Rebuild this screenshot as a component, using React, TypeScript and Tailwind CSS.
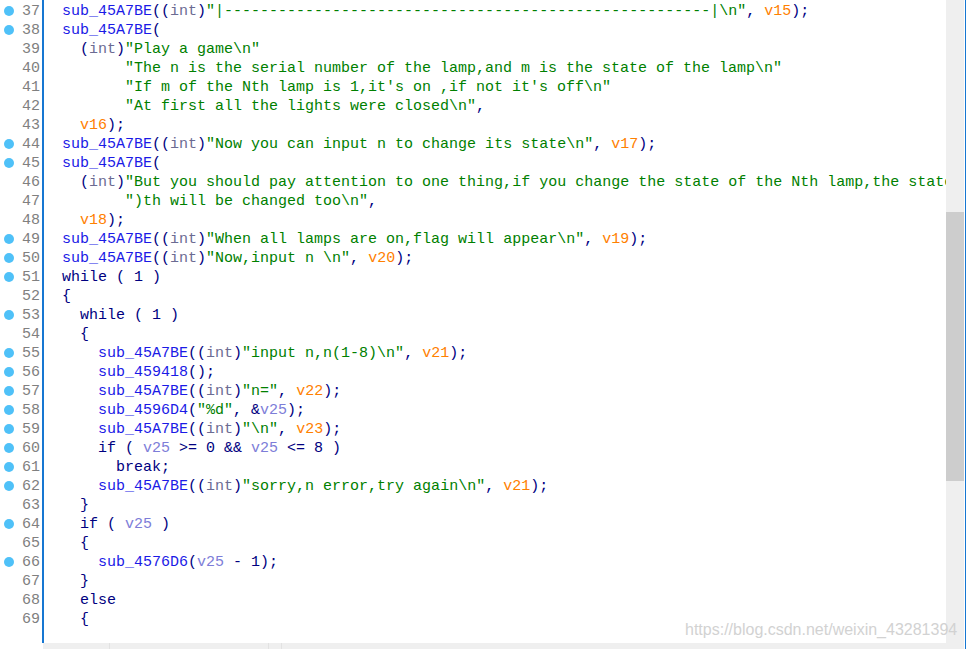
import React from 'react';

type Seg = [string, string];

const C = {
  fn: 'text-[#1a1ae6]',
  kw: 'text-[#000080]',
  str: 'text-[#008000]',
  gv: 'text-[#ff8000]',
  lv: 'text-[#7d7dd8]',
  ty: 'text-[#6b6b92]',
};

const f = (s: string): Seg => [s, C.fn];
const k = (s: string): Seg => [s, C.kw];
const s = (t: string): Seg => [t, C.str];
const g = (t: string): Seg => [t, C.gv];
const l = (t: string): Seg => [t, C.lv];
const INT: Seg[] = [k('('), ['int', C.ty], k(')')];

const dashes = '-'.repeat(54);

// [line number, has breakpoint dot, segments]
const lines: [number, boolean, Seg[]][] = [
  [37, true, [f('sub_45A7BE'), k('('), ...INT, s('"|' + dashes + '|\\n"'), k(', '), g('v15'), k(');')]],
  [38, true, [f('sub_45A7BE'), k('(')]],
  [39, false, [k('  '), ...INT, s('"Play a game\\n"')]],
  [40, false, [s('       "The n is the serial number of the lamp,and m is the state of the lamp\\n"')]],
  [41, false, [s('       "If m of the Nth lamp is 1,it\'s on ,if not it\'s off\\n"')]],
  [42, false, [s('       "At first all the lights were closed\\n"'), k(',')]],
  [43, false, [k('  '), g('v16'), k(');')]],
  [44, true, [f('sub_45A7BE'), k('('), ...INT, s('"Now you can input n to change its state\\n"'), k(', '), g('v17'), k(');')]],
  [45, true, [f('sub_45A7BE'), k('(')]],
  [46, false, [k('  '), ...INT, s('"But you should pay attention to one thing,if you change the state of the Nth lamp,the state of (N-1) and (N+1"')]],
  [47, false, [s('       ")th will be changed too\\n"'), k(',')]],
  [48, false, [k('  '), g('v18'), k(');')]],
  [49, true, [f('sub_45A7BE'), k('('), ...INT, s('"When all lamps are on,flag will appear\\n"'), k(', '), g('v19'), k(');')]],
  [50, true, [f('sub_45A7BE'), k('('), ...INT, s('"Now,input n \\n"'), k(', '), g('v20'), k(');')]],
  [51, true, [k('while ( 1 )')]],
  [52, false, [k('{')]],
  [53, true, [k('  while ( 1 )')]],
  [54, false, [k('  {')]],
  [55, true, [k('    '), f('sub_45A7BE'), k('('), ...INT, s('"input n,n(1-8)\\n"'), k(', '), g('v21'), k(');')]],
  [56, true, [k('    '), f('sub_459418'), k('();')]],
  [57, true, [k('    '), f('sub_45A7BE'), k('('), ...INT, s('"n="'), k(', '), g('v22'), k(');')]],
  [58, true, [k('    '), f('sub_4596D4'), k('('), s('"%d"'), k(', &'), l('v25'), k(');')]],
  [59, true, [k('    '), f('sub_45A7BE'), k('('), ...INT, s('"\\n"'), k(', '), g('v23'), k(');')]],
  [60, true, [k('    if ( '), l('v25'), k(' >= 0 && '), l('v25'), k(' <= 8 )')]],
  [61, true, [k('      break;')]],
  [62, true, [k('    '), f('sub_45A7BE'), k('('), ...INT, s('"sorry,n error,try again\\n"'), k(', '), g('v21'), k(');')]],
  [63, false, [k('  }')]],
  [64, true, [k('  if ( '), l('v25'), k(' )')]],
  [65, false, [k('  {')]],
  [66, true, [k('    '), f('sub_4576D6'), k('('), l('v25'), k(' - 1);')]],
  [67, false, [k('  }')]],
  [68, false, [k('  else')]],
  [69, false, [k('  {')]],
];

export default function App() {
  return (
    <div className="relative flex w-[966px] h-[649px] overflow-hidden bg-white font-['Liberation_Mono',monospace] text-[15px] leading-[19px]">
      <div className="flex flex-col w-[946px]">
        {/* editor body */}
        <div className="flex h-[643px]">
          <div className="w-[44px] shrink-0 border-r-2 border-[#1677d2] pt-[1.5px]">
            {lines.map(([n, dot]) => (
              <div key={n} className="relative h-[19px] pr-[2px] text-right text-[#808080]">
                {dot && (
                  <span className="absolute left-[4px] top-[4.5px] w-[10px] h-[10px] rounded-full bg-[#4fc1f8]" />
                )}
                {n}
              </div>
            ))}
          </div>
          <div className="flex-1 overflow-hidden pl-[18px] pt-[1.5px] whitespace-pre">
            {lines.map(([n, , segs]) => (
              <div key={n} className="h-[19px]">
                {segs.map(([t, c], i) => (
                  <span key={i} className={c}>{t}</span>
                ))}
              </div>
            ))}
          </div>
        </div>
        {/* horizontal scrollbar */}
        <div className="flex h-[6px]">
          <div className="w-[43px] bg-white" />
          <div className="flex-1 bg-[#efefef] flex">
            <div className="w-[67px] border-r border-[#e2e2e2]" />
            <div className="w-[159px] border-r border-[#e2e2e2]" />
            <div className="w-[13px] border-r border-[#e2e2e2]" />
          </div>
        </div>
      </div>
      {/* vertical scrollbar */}
      <div className="w-[18px] bg-[#efefef] pt-[212px]">
        <div className="h-[269px] bg-[#cdcdcd]" />
      </div>
      <div className="w-[1px] bg-white" />
      <div className="w-[1px] bg-[#1677d2]" />

      <div className="absolute left-[685px] top-[620px] font-['Liberation_Sans',Arial,sans-serif] text-[16px] leading-[20px] text-[#d2d2d2] whitespace-nowrap">
        https://blog.csdn.net/weixin_43281394
      </div>
    </div>
  );
}
